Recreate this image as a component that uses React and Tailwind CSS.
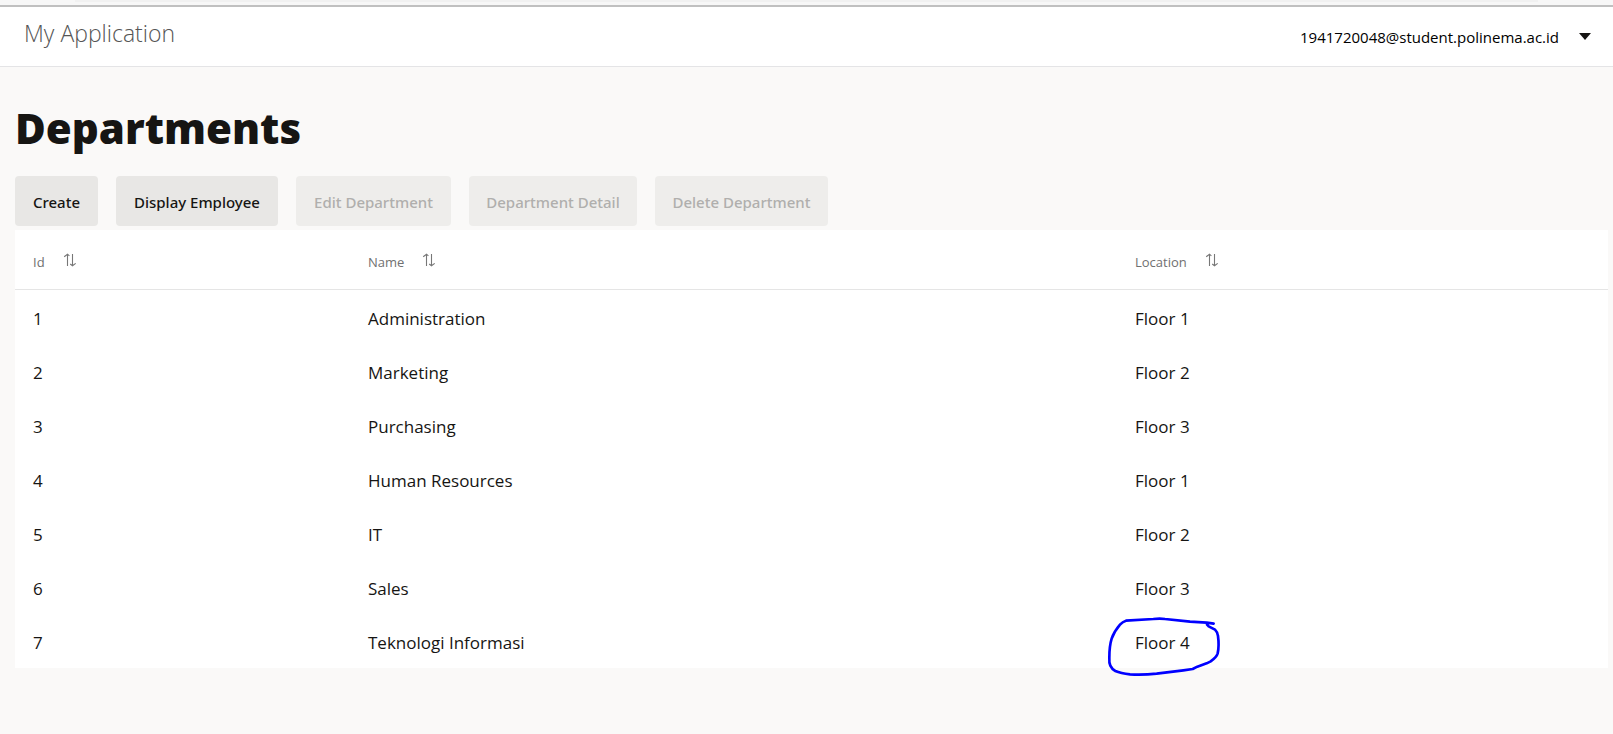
const departments = [
  { id: 1, name: "Administration", location: "Floor 1" },
  { id: 2, name: "Marketing", location: "Floor 2" },
  { id: 3, name: "Purchasing", location: "Floor 3" },
  { id: 4, name: "Human Resources", location: "Floor 1" },
  { id: 5, name: "IT", location: "Floor 2" },
  { id: 6, name: "Sales", location: "Floor 3" },
  { id: 7, name: "Teknologi Informasi", location: "Floor 4", marked: true },
];

const actions = [
  { label: "Create", enabled: true, width: "w-[83px]" },
  { label: "Display Employee", enabled: true, width: "w-[162px]" },
  { label: "Edit Department", enabled: false, width: "w-[155px]" },
  { label: "Department Detail", enabled: false, width: "w-[168px]" },
  { label: "Delete Department", enabled: false, width: "w-[173px]" },
];

function SortIcon() {
  return (
    <svg className="h-[14px] w-[14px]" viewBox="0 0 14 14" fill="none" stroke="#777777" strokeWidth="1.1" aria-hidden="true">
      <path d="M4.5 13V1.2M1.2 3.8 4.5 1.2 6.4 2.8M9.5 1v11.8M7.2 11l2.3 1.8 3.2-2.4" />
    </svg>
  );
}

function HeaderCell({ children }) {
  return (
    <th scope="col" className="border-b border-[#e5e5e5] px-[18px] text-left font-normal">
      <div className="flex items-center gap-[18px]">
        <span className="pt-1 text-[13px] leading-5 text-[#707070]">{children}</span>
        <button type="button" aria-label={`Sort by ${children}`}>
          <SortIcon />
        </button>
      </div>
    </th>
  );
}

function InkCircle() {
  return (
    <svg
      className="pointer-events-none absolute -left-7 -top-[15px] h-[61px] w-[114px] max-w-none"
      viewBox="51 165 342 183"
      fill="none"
      stroke="#0000ff"
      strokeWidth="8"
      strokeLinecap="round"
      strokeLinejoin="round"
      aria-hidden="true"
    >
      <path d="M371 188 L350 185 L300 182 L225 174 Q210 172 190 174 L108 179 Q98 182 90 191 Q72 212 65 233 Q58 255 58 290 Q57 306 61 314 Q66 325 76 330 Q92 337 120 340 Q160 342 200 338 L280 328 L308 324 L322 317 L350 307 L362 301 Q380 288 383 277 Q388 255 384 225 Q383 214 375 206 L356 196 L351 191" />
    </svg>
  );
}

export default function App() {
  return (
    <div className="min-h-screen bg-[#faf9f8] font-['Open_Sans','Noto_Sans',sans-serif] text-[#161513]">
      <div className="h-[7px] border-b-2 border-[#c0c0c0] bg-[#f7f7f7] px-[75px]">
        <div className="h-[2px] bg-[#f1f1f1]" />
      </div>
      <header className="flex h-[60px] items-center justify-between border-b border-[#e4e4e6] bg-white pl-6 pr-[22px]">
        <span className="pb-2 text-[23px] font-light leading-8 text-[#555555]">My Application</span>
        <button type="button" className="flex items-center gap-5 text-[15px] leading-5 text-black">
          1941720048@student.polinema.ac.id
          <svg className="h-[7px] w-3" viewBox="0 0 12 7" fill="#161513" aria-hidden="true">
            <path d="M0 0h12L6 7z" />
          </svg>
        </button>
      </header>
      <main className="pl-[15px] pr-[5px] pt-[29px]">
        <h1 className="text-[42px] font-extrabold leading-[64px]">Departments</h1>
        <div className="mt-4 flex gap-[18px]">
          {actions.map((a) => (
            <button
              key={a.label}
              type="button"
              disabled={!a.enabled}
              className={`h-[50px] whitespace-nowrap rounded-[4px] pt-0.5 font-['Noto_Sans',sans-serif] text-[15px] font-medium leading-5 ${a.width} ${
                a.enabled ? "bg-[#e8e7e5] text-[#161513]" : "bg-[#eeedeb] text-[#b0afad]"
              }`}
            >
              {a.label}
            </button>
          ))}
        </div>
        <table className="mt-1 w-full table-fixed border-separate border-spacing-0 bg-white">
          <colgroup>
            <col className="w-[335px]" />
            <col />
            <col className="w-[491px]" />
          </colgroup>
          <thead>
            <tr className="h-[60px]">
              <HeaderCell>Id</HeaderCell>
              <HeaderCell>Name</HeaderCell>
              <HeaderCell>Location</HeaderCell>
            </tr>
          </thead>
          <tbody className="text-[17px] leading-6">
            {departments.map((d) => (
              <tr key={d.id} className="h-[54px]">
                <td className="px-[18px] pt-1">{d.id}</td>
                <td className="px-[18px] pt-1">{d.name}</td>
                <td className="px-[18px] pt-1">
                  <span className="relative inline-block">
                    {d.location}
                    {d.marked && <InkCircle />}
                  </span>
                </td>
              </tr>
            ))}
          </tbody>
        </table>
      </main>
    </div>
  );
}
